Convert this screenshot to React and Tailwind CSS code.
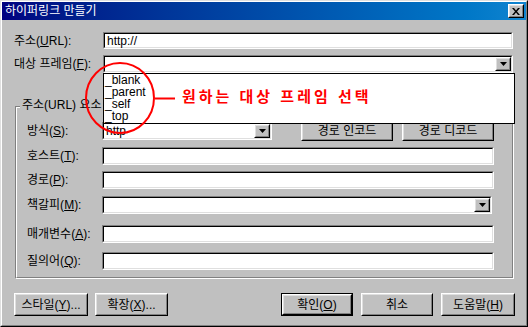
import React from 'react'

const FONT = { fontFamily: '"Liberation Sans", "Noto Sans CJK KR", sans-serif' }

function Sunken({ className = '', children }) {
  return (
    <div className={`border border-t-[#808080] border-l-[#808080] border-b-white border-r-white ${className}`}>
      <div className="h-full flex items-center bg-white border border-t-black border-l-black border-b-[#dfdfdf] border-r-[#dfdfdf]">
        {children}
      </div>
    </div>
  )
}

function Raised({ className = '', children }) {
  return (
    <div className={`border border-t-white border-l-white border-b-black border-r-black bg-[#c0c0c0] ${className}`}>
      <div className="h-full flex items-center justify-center border border-t-[#dfdfdf] border-l-[#dfdfdf] border-b-[#808080] border-r-[#808080]">
        {children}
      </div>
    </div>
  )
}

function Arrow() {
  return (
    <svg width="7" height="4" viewBox="0 0 7 4">
      <path d="M0 0h7L3.5 4z" fill="#000" />
    </svg>
  )
}

function Combo({ className = '', text }) {
  return (
    <Sunken className={className}>
      <span className="flex-1 pl-[2px] text-[12px] leading-[14px] text-black">{text}</span>
      <Raised className="w-[16px] h-full">
        <Arrow />
      </Raised>
    </Sunken>
  )
}

function Button({ className = '', def, children }) {
  const face = (
    <Raised className="h-full w-full">
      <span className="text-[12px] leading-[14px] text-black">{children}</span>
    </Raised>
  )
  if (def) return <div className={`border border-black ${className}`}>{face}</div>
  return <div className={className}>{face}</div>
}

function Row({ label, labelW, className = '', children }) {
  return (
    <div className={`flex items-center ${className}`}>
      <div className="text-[12px] leading-[14px] text-black whitespace-nowrap" style={{ width: labelW }}>{label}</div>
      {children}
    </div>
  )
}

export default function App() {
  return (
    <div className="w-[528px] h-[327px] relative bg-[#c0c0c0]" style={FONT}>
      <div className="w-full h-full border border-t-[#dfdfdf] border-l-[#dfdfdf] border-b-black border-r-black">
        <div className="w-full h-full border border-t-white border-l-white border-b-[#808080] border-r-[#808080] flex flex-col">
          {/* title bar */}
          <div className="h-[18px] flex items-center justify-between bg-linear-to-r from-[#000080] to-[#1084d0] pl-[3px] pr-[2px]">
            <span className="text-white text-[12px] leading-[14px]">하이퍼링크 만들기</span>
            <Raised className="w-[16px] h-[14px]">
              <svg width="8" height="7" viewBox="0 0 8 7">
                <path d="M0 0h2l2 2.5L6 0h2L5 3.5 8 7H6L4 4.5 2 7H0l3-3.5z" fill="#000" />
              </svg>
            </Raised>
          </div>

          {/* top fields */}
          <Row label={<>주소(<u>U</u>RL):</>} labelW="89px" className="h-[17px] mt-[12px] pl-[12px]">
            <Sunken className="w-[410px] h-[17px]">
              <span className="pl-[2px] text-[12px] leading-[14px] text-black">http://</span>
            </Sunken>
          </Row>
          <Row label={<>대상 프레임(<u>F</u>):</>} labelW="89px" className="h-[18px] mt-[6px] pl-[12px]">
            <Combo className="w-[410px] h-[18px]" text="" />
          </Row>

          {/* group box */}
          <div className="relative mt-[33px] ml-[13px] w-[499px] h-[173px] border border-t-[#808080] border-l-[#808080] border-b-white border-r-white">
            <div className="h-full border border-t-white border-l-white border-b-[#808080] border-r-[#808080] flex flex-col pl-[10px] pt-[12px]">
              <Row label={<>방식(<u>S</u>):</>} labelW="75px" className="h-[21px]">
                <Combo className="w-[170px] h-[18px]" text="http" />
                <Button className="w-[92px] h-[21px] ml-[29px]">경로 인코드</Button>
                <Button className="w-[92px] h-[21px] ml-[9px]">경로 디코드</Button>
              </Row>
              <Row label={<>호스트(<u>T</u>):</>} labelW="75px" className="h-[18px] mt-[6px]">
                <Sunken className="w-[392px] h-[18px]" />
              </Row>
              <Row label={<>경로(<u>P</u>):</>} labelW="75px" className="h-[18px] mt-[6px]">
                <Sunken className="w-[392px] h-[18px]" />
              </Row>
              <Row label={<>책갈피(<u>M</u>):</>} labelW="75px" className="h-[18px] mt-[7px]">
                <Combo className="w-[390px] h-[18px]" text="" />
              </Row>
              <Row label={<>매개변수(<u>A</u>):</>} labelW="75px" className="h-[18px] mt-[11px]">
                <Sunken className="w-[392px] h-[18px]" />
              </Row>
              <Row label={<>질의어(<u>Q</u>):</>} labelW="75px" className="h-[18px] mt-[9px]">
                <Sunken className="w-[392px] h-[18px]" />
              </Row>
            </div>
            <span className="absolute left-[4px] top-[-9px] px-[2px] bg-[#c0c0c0] text-[12px] leading-[14px] text-black whitespace-nowrap">
              주소(URL) 요소
            </span>
          </div>

          {/* bottom buttons */}
          <div className="flex h-[23px] mt-[14px] pl-[12px]">
            <Button className="w-[74px] h-[23px]">스타일(<u>Y</u>)...</Button>
            <Button className="w-[73px] h-[23px] ml-[7px]">확장(<u>X</u>)...</Button>
            <Button def className="w-[72px] h-[23px] ml-[113px]">확인(<u>O</u>)</Button>
            <Button className="w-[72px] h-[23px] ml-[8px]">취소</Button>
            <Button className="w-[74px] h-[23px] ml-[8px]">도움말(<u>H</u>)</Button>
          </div>
        </div>
      </div>

      {/* open drop-down list of 대상 프레임 */}
      <div className="absolute left-[103px] top-[73px] w-[412px] h-[51px] bg-white border border-black flex flex-col">
        {['_blank', '_parent', '_self', '_top'].map((t) => (
          <div key={t} className="h-[12px] pl-[1px] text-[12px] leading-[12px] text-black">{t}</div>
        ))}
      </div>

      {/* red annotation */}
      <svg className="absolute left-0 top-0 pointer-events-none" width="528" height="327" viewBox="0 0 528 327">
        <ellipse cx="120" cy="98" rx="34" ry="35" fill="none" stroke="#ff0000" strokeWidth="2" />
        <line x1="155" y1="98.5" x2="175" y2="98.5" stroke="#ff0000" strokeWidth="2" />
      </svg>
      <div className="absolute left-[182px] top-[89px] text-[15px] leading-[15px] font-bold tracking-[3px] text-[#ff0000] whitespace-nowrap">
        원하는 대상 프레임 선택
      </div>
    </div>
  )
}
